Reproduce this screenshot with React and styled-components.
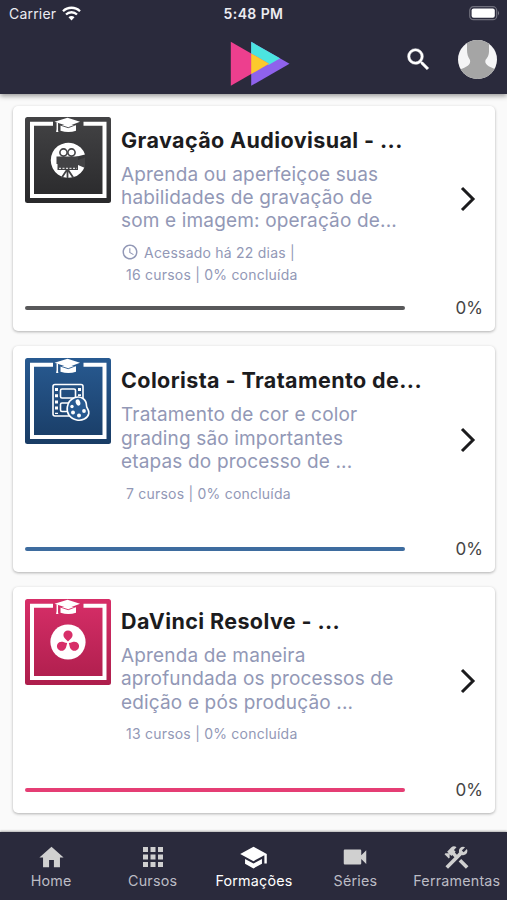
import React from "react";
import styled, { createGlobalStyle } from "styled-components";
import {
  MdApps,
  MdHome,
  MdSchool,
  MdSearch,
  MdVideocam,
  MdAccessTime,
} from "react-icons/md";

const GlobalStyle = createGlobalStyle`
  :root {
    --color-dark: #2a2a3c;
    --color-page: #fafafa;
    --color-text: #1c1c1e;
    --color-muted: #9298b6;
    --color-inactive: #bcbcc5;
  }
  * {
    box-sizing: border-box;
  }
  body {
    margin: 0;
    background: var(--color-page);
    font-family: Inter, "Liberation Sans", sans-serif;
  }
`;

const SCREEN = styled.div`
  display: flex;
  flex-direction: column;
  width: 507px;
  height: 900px;
  overflow: hidden;
  background: var(--color-page);
`;

const HEADER = styled.header`
  flex: 0 0 94px;
  background: var(--color-dark);
  color: #fff;
  box-shadow: 0 2px 5px rgba(0, 0, 0, 0.4);
  z-index: 1;
`;

const StatusBar = styled.div`
  display: grid;
  grid-template-columns: 1fr auto 1fr;
  align-items: center;
  height: 27px;
  padding: 0 7px 0 9px;
  font-size: 14px;
  color: #ececf2;
  svg {
    display: block;
  }
  .carrier {
    display: flex;
    align-items: center;
    gap: 6px;
    letter-spacing: 0.2px;
  }
  .time {
    margin: 0 1px 0 -1px;
    font-weight: 600;
    letter-spacing: 0.4px;
  }
  .battery {
    justify-self: end;
  }
`;

const AppBar = styled.div`
  display: grid;
  grid-template-columns: 1fr 60px 1fr;
  height: 67px;
  padding: 0 10px 0 12px;
  .logo {
    display: block;
    margin: 14px 0 0 5px;
  }
  .actions {
    display: flex;
    align-items: center;
    justify-content: flex-end;
    gap: 25px;
    padding-bottom: 3px;
  }
  .search path:last-child {
    stroke: currentColor;
    stroke-width: 0.4px;
  }
`;

const Avatar = styled.svg`
  display: block;
  border-radius: 50%;
`;

const LIST = styled.main`
  flex: 1;
  display: flex;
  flex-direction: column;
  gap: 15px;
  padding: 11.5px 12px 0 13px;
`;

const Card = styled.article`
  display: flex;
  flex-direction: column;
  height: 225.7px;
  padding: 11.7px 13px 0 12px;
  border-radius: 5px;
  background: #fff;
  box-shadow: 0 1px 3px rgba(0, 0, 0, 0.3);
`;

const CardBody = styled.div`
  display: flex;
  height: 183.3px;
  .chevron {
    align-self: flex-start;
    margin: 69px 6px 0 auto;
  }
`;

const Badge = styled.svg`
  display: block;
  flex: 0 0 86px;
  margin-right: 10px;
`;

const Info = styled.div`
  width: 310px;
  white-space: nowrap;
`;

const Title = styled.h2`
  margin: 8.5px 0 8.1px;
  font-size: 21.5px;
  line-height: 29px;
  font-weight: 700;
  letter-spacing: 0.4px;
  color: var(--color-text);
`;

const Description = styled.p`
  margin: 0 0 8.7px;
  font-size: 19px;
  line-height: 23.3px;
  letter-spacing: 0.16px;
  color: var(--color-muted);
  white-space: pre-line;
`;

const Meta = styled.div`
  display: flex;
  align-items: center;
  height: 22px;
  padding-left: ${({ $icon }) => ($icon ? "0" : "5px")};
  font-size: 14px;
  letter-spacing: 0.22px;
  color: var(--color-muted);
  svg {
    margin-right: 5px;
  }
`;

const ProgressRow = styled.div`
  display: flex;
  align-items: center;
  justify-content: space-between;
  height: 16px;
  font-size: 17px;
  color: #444;
  span {
    margin-right: -1px;
  }
`;

const Track = styled.div`
  width: 380px;
  height: 4px;
  border-radius: 2px;
  background: ${({ $color }) => $color};
`;

const NAV = styled.nav`
  display: grid;
  grid-template-columns: repeat(5, 1fr);
  flex: 0 0 68px;
  background: var(--color-dark);
  box-shadow: 0 -1px 2px rgba(0, 0, 0, 0.3);
`;

const NavItem = styled.a`
  display: flex;
  flex-direction: column;
  align-items: center;
  padding: 10px 0 0 1px;
  font-size: 14.3px;
  line-height: 18px;
  letter-spacing: 0.2px;
  color: ${({ $active }) => ($active ? "#fff" : "var(--color-inactive)")};
  .icon {
    display: flex;
    align-items: center;
    justify-content: center;
    height: 30px;
    color: ${({ $active }) => ($active ? "#fff" : "#d0d0d0")};
  }
`;

const Wifi = () => (
  <svg width="19" height="15" viewBox="0 0 19 15" fill="none" stroke="#fff">
    <path d="M1 5.2a12.2 12.2 0 0 1 17 0" strokeWidth="2.3" />
    <path d="M4 8.5a7.8 7.8 0 0 1 11 0" strokeWidth="2.3" />
    <path d="M9.5 14.5l-3-3.2a4.2 4.2 0 0 1 6 0z" fill="#fff" stroke="none" />
  </svg>
);

const Battery = () => (
  <svg width="31" height="15" viewBox="0 0 31 15">
    <rect x="0.7" y="0.7" width="27" height="13" rx="3.8" fill="none" stroke="#6f6f7c" strokeWidth="1.2" />
    <rect x="2.6" y="2.6" width="23.2" height="9.2" rx="2" fill="#fff" />
    <path d="M29 4.8q1.9 2.4 0 4.8z" fill="#85858f" />
  </svg>
);

const Logo = () => (
  <svg className="logo" width="60" height="46" viewBox="0 0 60 46">
    <path d="M21.2 0.8L59.5 22.7L21.2 44.8z" fill="#8f62ec" />
    <path d="M21.2 0.8L50 17.3L38.5 23L21.2 33z" fill="#4ce4e0" />
    <path d="M50 17.3L38.5 24L21.2 14z" fill="#4ce4e0" />
    <path d="M0.8 0.8L39 22.7L0.8 44.8z" fill="#ed3f8e" />
    <path d="M21.2 12.5L39 22.7L21.2 33z" fill="#fcca2c" />
  </svg>
);

const Tools = () => (
  <svg width="29" height="29" viewBox="0 0 24 24" fill="currentColor">
    <path d="M13.78 15.3L19.78 21.3L21.89 19.14L15.89 13.14L13.78 15.3M17.5 10.1C17.11 10.1 16.69 10.05 16.36 9.91L4.97 21.25L2.86 19.14L10.27 11.74L8.5 9.96L7.78 10.66L6.33 9.25V12.11L5.63 12.81L2.11 9.25L2.81 8.55H5.62L4.22 7.14L7.78 3.58C8.95 2.41 10.83 2.41 12 3.58L9.89 5.74L11.3 7.14L10.59 7.85L12.38 9.63L14.2 7.75C14.06 7.42 14 7 14 6.63C14 4.66 15.56 3.11 17.5 3.11C18.09 3.11 18.61 3.25 19.08 3.53L16.41 6.2L17.91 7.7L20.58 5.03C20.86 5.5 21 6 21 6.63C21 8.55 19.45 10.1 17.5 10.1Z" />
  </svg>
);

const Camera = ({ color }) => (
  <g>
    <path d="M60 37.500A17.600 17.600 0 1 0 60 49L50 46V40z" fill="#fff" />
    <circle cx="38.500" cy="35.500" r="3.600" fill="none" stroke={color} strokeWidth="1.600" />
    <circle cx="46.500" cy="35.500" r="3.600" fill="none" stroke={color} strokeWidth="1.600" />
    <path d="M31.500 39.500H53V43L60 40.500V51L53 48V53H32.500V47H31.500z" fill={color} />
    <path d="M42.500 52L36.500 61M42.500 52L48.500 61M42.500 52V61" stroke={color} strokeWidth="1.800" />
    <path d="M34 51.300H52" stroke="#fff" strokeWidth="1" strokeDasharray="2 1.500" />
  </g>
);

const Palette = ({ color }) => (
  <g fill="none" stroke="#fff" strokeWidth="1.6">
    <rect x="28" y="26.5" width="30" height="31.5" rx="2" />
    <rect x="35.5" y="31" width="15" height="9" rx="1.5" />
    <rect x="35.5" y="45" width="12" height="8.5" rx="1.5" />
    <path d="M31.5 30v26M54.5 30v8" strokeWidth="3" strokeDasharray="3 3.2" />
    <path
      d="M50 39.500c6-2 11.500 2 11.500 8-.2 3 3 4 2.300 8-1 5-7 7.500-12 6.500-7-1.200-10.500-7-9.500-13 .7-4.500 3.500-8 7.700-9.500z"
      fill={color}
    />
    <g fill="#fff" stroke="none">
      <ellipse cx="53" cy="44.500" rx="2.200" ry="3.200" transform="rotate(-20 53 44.500)" />
      <circle cx="47" cy="48.500" r="1.700" />
      <circle cx="48" cy="54.500" r="2" />
      <circle cx="54" cy="57.500" r="2" />
      <circle cx="59" cy="53" r="1.900" />
    </g>
  </g>
);

const Resolve = ({ color }) => (
  <g>
    <circle cx="43" cy="43" r="17.6" fill="#fff" />
    {[0, 120, 240].map((angle) => (
      <path
        key={angle}
        d="M43 42.500C40.500 40 38.400 38.700 38.400 36a4.600 4.600 0 0 1 9.200 0C47.600 38.700 45.500 40 43 42.500z"
        fill={color}
        transform={`rotate(${angle} 43 43.500)`}
      />
    ))}
  </g>
);

const CourseBadge = ({ id, from, to, Drawing }) => (
  <Badge width="86" height="86" viewBox="0 0 86 86">
    <defs>
      <linearGradient id={id} x1="0" y1="0" x2="0" y2="1">
        <stop offset="0" stopColor={from} />
        <stop offset="1" stopColor={to} />
      </linearGradient>
    </defs>
    <rect width="86" height="86" rx="2.5" fill={`url(#${id})`} />
    <path d="M28 6.700H7V79H79.500V6.700H58.500" fill="none" stroke="#fff" strokeWidth="4" />
    <path d="M35.500 8V13.700Q43.500 16.500 51 13.700V8z" fill="#fff" />
    <path d="M29.500 4.800L42.500 0.800L55 4.800L43.200 9.300z" fill="#fff" />
    <path d="M35 8L43.200 10.700L51.500 7.500" fill="none" stroke={from} strokeWidth="0.900" />
    <path d="M32.300 5.500V15" stroke="#fff" strokeWidth="1.500" />
    <path d="M31.200 15L32.300 11L33.400 15z" fill="#fff" />
    <Drawing color={from} />
  </Badge>
);

const COURSES = [
  {
    id: "gravacao",
    title: "Gravação Audiovisual - ...",
    description:
      "Aprenda ou aperfeiçoe suas\nhabilidades de gravação de\nsom e imagem: operação de...",
    accessed: "Acessado há 22 dias |",
    meta: "16 cursos | 0% concluída",
    from: "#434345",
    to: "#29292b",
    bar: "#58585a",
    Drawing: Camera,
  },
  {
    id: "colorista",
    title: "Colorista - Tratamento de...",
    description:
      "Tratamento de cor e color\ngrading são importantes\netapas do processo de ...",
    meta: "7 cursos | 0% concluída",
    from: "#285a91",
    to: "#193c65",
    bar: "#3e6c9f",
    Drawing: Palette,
  },
  {
    id: "davinci",
    title: "DaVinci Resolve - ...",
    description:
      "Aprenda de maneira\naprofundada os processos de\nedição e pós produção ...",
    meta: "13 cursos | 0% concluída",
    from: "#d72e68",
    to: "#ad1e4c",
    bar: "#e53e74",
    Drawing: Resolve,
  },
];

const CourseCard = ({ course }) => (
  <Card>
    <CardBody>
      <CourseBadge {...course} />
      <Info>
        <Title>{course.title}</Title>
        <Description>{course.description}</Description>
        {course.accessed && (
          <Meta $icon>
            <MdAccessTime size={18} />
            {course.accessed}
          </Meta>
        )}
        <Meta>{course.meta}</Meta>
      </Info>
      <svg className="chevron" width="17" height="26" viewBox="0 0 17 26" fill="none">
        <path d="M3 2L14 13L3 24" stroke="#1b1b1d" strokeWidth="3" />
      </svg>
    </CardBody>
    <ProgressRow>
      <Track $color={course.bar} />
      <span>0%</span>
    </ProgressRow>
  </Card>
);

const TABS = [
  { label: "Home", icon: <MdHome size={29} /> },
  { label: "Cursos", icon: <MdApps size={30} /> },
  { label: "Formações", icon: <MdSchool size={29} />, active: true },
  { label: "Séries", icon: <MdVideocam size={30} /> },
  { label: "Ferramentas", icon: <Tools /> },
];

const App = () => {
  return (
    <>
      <GlobalStyle />
      <SCREEN>
        <HEADER>
          <StatusBar>
            <span className="carrier">
              Carrier
              <Wifi />
            </span>
            <span className="time">5:48 PM</span>
            <span className="battery">
              <Battery />
            </span>
          </StatusBar>
          <AppBar>
            <span />
            <Logo />
            <div className="actions">
              <MdSearch className="search" size={29} />
              <Avatar width="39" height="39" viewBox="0 0 39 39">
                <rect width="39" height="39" fill="#f5f5f6" />
                <path
                  d="M9 0H31V11C31 16 29 18 27.500 20C26.500 24 29 26 39 30V39H0V30C9 27 13 25 12 20C10 17 9 14 9 10z"
                  fill="#a5a5a5"
                />
              </Avatar>
            </div>
          </AppBar>
        </HEADER>
        <LIST>
          {COURSES.map((course) => (
            <CourseCard key={course.id} course={course} />
          ))}
        </LIST>
        <NAV>
          {TABS.map(({ label, icon, active }) => (
            <NavItem key={label} $active={active}>
              <span className="icon">{icon}</span>
              {label}
            </NavItem>
          ))}
        </NAV>
      </SCREEN>
    </>
  );
};

export default App;
